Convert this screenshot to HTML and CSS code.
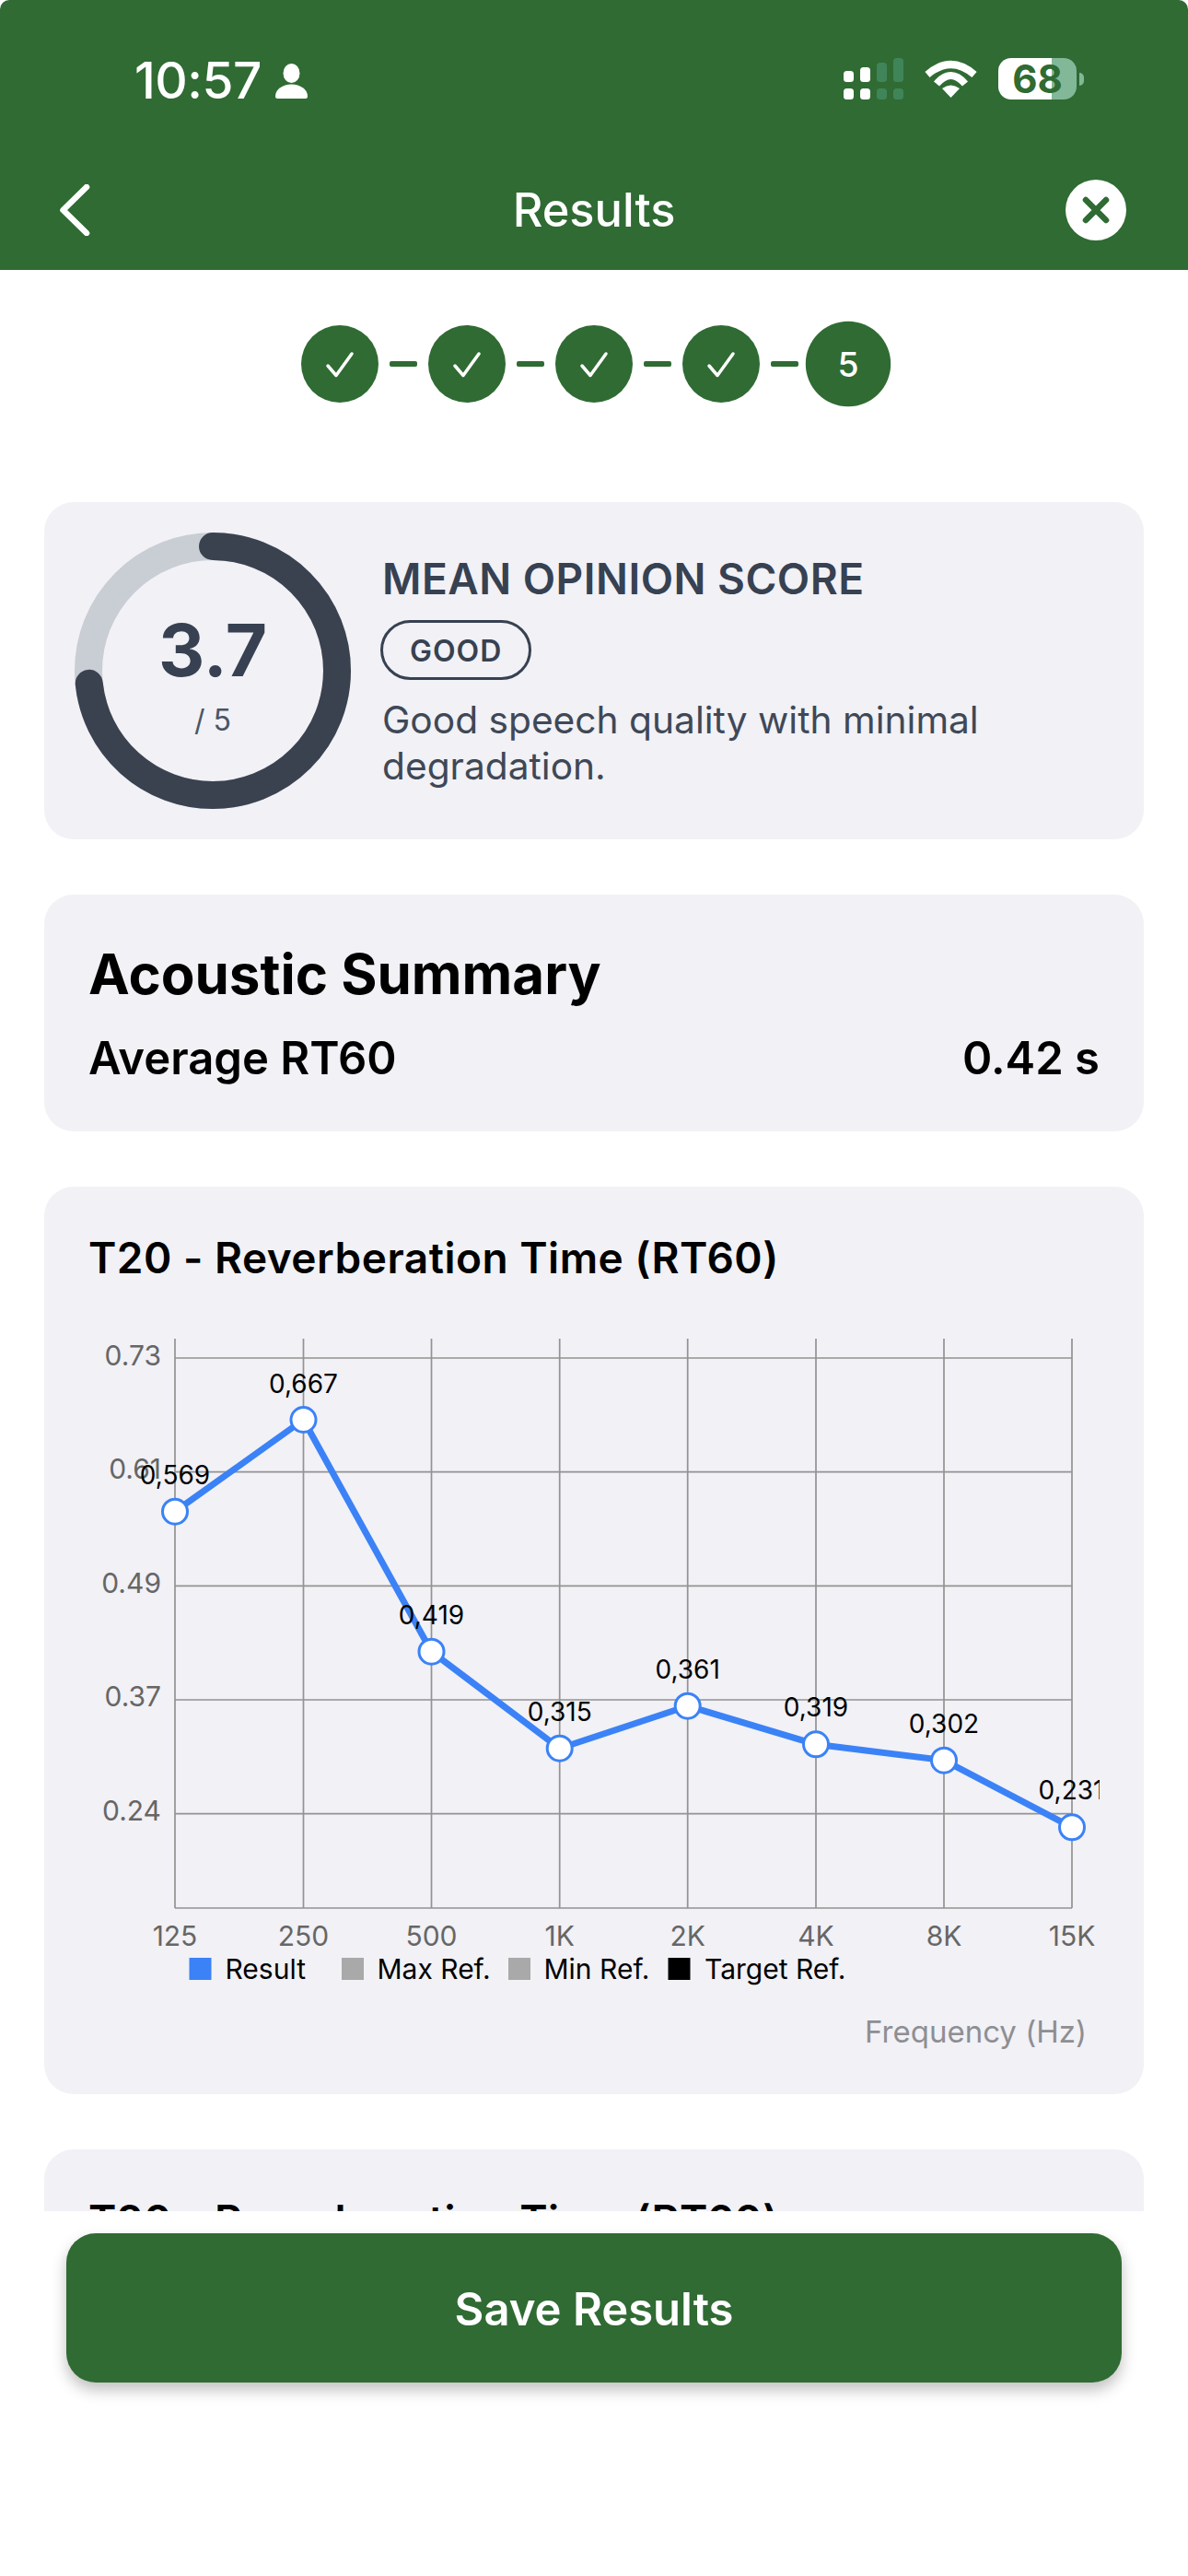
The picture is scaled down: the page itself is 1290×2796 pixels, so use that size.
FILE: index.html
```html
<!DOCTYPE html>
<html lang="en">
<head>
<meta charset="utf-8">
<title>Results</title>
<link rel="stylesheet" href="styles.css">
</head>
<body>
<div class="screen">
  <header class="header">
    <div class="status">
      <span class="time">10:57</span>
      <svg class="person" viewBox="0 0 35 38" width="35" height="38"><ellipse cx="17.5" cy="10.5" rx="9" ry="10.5"/><path d="M2.500 38H32.500Q35 38 35 35.500C35 28 27 22.500 17.500 22.500C8 22.500 0 28 0 35.500Q0 38 2.500 38Z"/></svg>
      <div class="status-right">
        <svg class="signal" viewBox="0 0 65 45" width="65" height="45">
          <rect class="on" x="0" y="14" width="11" height="12" rx="3.500"/><rect class="on" x="18" y="10" width="11" height="16" rx="3.500"/>
          <rect class="off" x="36" y="5" width="11" height="21" rx="3.500"/><rect class="off" x="54" y="0" width="11" height="26" rx="3.500"/>
          <rect class="on" x="0" y="33" width="11" height="12" rx="3.500"/><rect class="on" x="18" y="33" width="11" height="12" rx="3.500"/>
          <rect class="off" x="36" y="33" width="11" height="12" rx="3.500"/><rect class="off" x="54" y="33" width="11" height="12" rx="3.500"/>
        </svg>
        <svg class="wifi" viewBox="0 0 57 41" width="57" height="41">
          <path class="arc" d="M3 16Q28.500 -6 54 16"/><path class="arc" d="M13 26Q28.500 8 44 26"/><path class="wedge" d="M28.500 41L19 31Q28.500 24 38 31Z"/>
        </svg>
        <div class="battery"><div class="battery-body">68</div><div class="battery-cap"></div></div>
      </div>
    </div>
    <nav class="nav">
      <svg class="back" viewBox="0 0 33 56" width="33" height="56"><path d="M29 3L3.500 28L29 53"/></svg>
      <div class="nav-title">Results</div>
      <svg class="close" viewBox="0 0 66 66" width="66" height="66"><circle cx="33" cy="33" r="33"/><path d="M22 22L44 44M44 22L22 44"/></svg>
    </nav>
  </header>

  <main class="main">
    <div class="stepper">
      <div class="step"><svg viewBox="0 0 84 84" width="84" height="84"><path d="M29 44L38 54.500L55 31"/></svg></div>
      <div class="link"></div>
      <div class="step"><svg viewBox="0 0 84 84" width="84" height="84"><path d="M29 44L38 54.500L55 31"/></svg></div>
      <div class="link"></div>
      <div class="step"><svg viewBox="0 0 84 84" width="84" height="84"><path d="M29 44L38 54.500L55 31"/></svg></div>
      <div class="link"></div>
      <div class="step"><svg viewBox="0 0 84 84" width="84" height="84"><path d="M29 44L38 54.500L55 31"/></svg></div>
      <div class="link"></div>
      <div class="step step-current">5</div>
    </div>

    <section class="card card-score">
      <div class="gauge">
        <svg viewBox="0 0 300 300" width="300" height="300">
          <circle class="gauge-track" cx="150" cy="150" r="135"/>
          <circle class="gauge-value" cx="150" cy="150" r="135" stroke-dasharray="622 848.230" transform="rotate(-90 150 150)"/>
        </svg>
        <div class="gauge-text"><div class="gauge-num">3.7</div><div class="gauge-max">/ 5</div></div>
      </div>
      <div class="score-info">
        <div class="score-title">MEAN OPINION SCORE</div>
        <div class="pill">GOOD</div>
        <p class="score-desc">Good speech quality with minimal degradation.</p>
      </div>
    </section>

    <section class="card card-summary">
      <h2 class="summary-title">Acoustic Summary</h2>
      <div class="summary-row"><span>Average RT60</span><span>0.42 s</span></div>
    </section>

    <section class="card card-chart">
      <h3 class="chart-title">T20 - Reverberation Time (RT60)</h3>
      <svg class="chart" viewBox="96 1440 1098 720" width="1098" height="720">
        <g class="grid">
          <path d="M190 1453V2071M329.500 1453V2071M468.500 1453V2071M607.700 1453V2071M746.700 1453V2071M886 1453V2071M1025 1453V2071M1164 1453V2071"/>
          <path d="M190 1474H1164M190 1597.700H1164M190 1721.300H1164M190 1845H1164M190 1968.700H1164M190 2071H1164"/>
        </g>
        <g class="axis axis-y">
          <text x="175" y="1482">0.73</text><text x="175" y="1605">0.61</text><text x="175" y="1729">0.49</text><text x="175" y="1852">0.37</text><text x="175" y="1976">0.24</text>
        </g>
        <g class="axis axis-x">
          <text x="190" y="2112">125</text><text x="329.500" y="2112">250</text><text x="468.500" y="2112">500</text><text x="607.700" y="2112">1K</text><text x="746.700" y="2112">2K</text><text x="886" y="2112">4K</text><text x="1025" y="2112">8K</text><text x="1164" y="2112">15K</text>
        </g>
        <polyline class="series" points="190,1640.700 329.500,1541 468.500,1792.700 607.700,1897.700 746.700,1851.700 886,1893.300 1025,1910.700 1164,1983.300"/>
        <g class="dots">
          <circle cx="190" cy="1640.700" r="13.500"/><circle cx="329.500" cy="1541" r="13.500"/><circle cx="468.500" cy="1792.700" r="13.500"/><circle cx="607.700" cy="1897.700" r="13.500"/><circle cx="746.700" cy="1851.700" r="13.500"/><circle cx="886" cy="1893.300" r="13.500"/><circle cx="1025" cy="1910.700" r="13.500"/><circle cx="1164" cy="1983.300" r="13.500"/>
        </g>
        <g class="values">
          <text x="190" y="1611">0,569</text><text x="329.500" y="1512">0,667</text><text x="468.500" y="1763">0,419</text><text x="607.700" y="1868">0,315</text><text x="746.700" y="1822">0,361</text><text x="886" y="1863">0,319</text><text x="1025" y="1881">0,302</text><text x="1163" y="1953">0,231</text>
        </g>
        <g class="legend">
          <rect class="sw-blue" x="205.500" y="2125" width="24" height="24"/><text x="244.500" y="2148">Result</text>
          <rect class="sw-gray" x="371" y="2125" width="24" height="24"/><text x="409.500" y="2148">Max Ref.</text>
          <rect class="sw-gray" x="552" y="2125" width="24" height="24"/><text x="590.500" y="2148">Min Ref.</text>
          <rect class="sw-black" x="725.500" y="2125" width="24" height="24"/><text x="765" y="2148">Target Ref.</text>
        </g>
      </svg>
      <div class="chart-axis-title">Frequency (Hz)</div>
    </section>

    <section class="card card-chart">
      <h3 class="chart-title">T20 - Reverberation Time (RT60)</h3>
    </section>
  </main>

  <footer class="footer">
    <button class="save">Save Results</button>
  </footer>
</div>
</body>
</html>
```

FILE: styles.css
```css
* { box-sizing: border-box; }
html, body { margin: 0; padding: 0; background: #fff; }
body { font-family: Inter, "Liberation Sans", sans-serif; width: 1290px; height: 2796px; overflow: hidden; }
.screen { width: 1290px; height: 2796px; display: flex; flex-direction: column; }

.header { height: 293px; background: #2f6b33; border-radius: 10px 10px 0 0; color: #fff; padding-top: 57px; flex: none; }
.status { height: 60px; display: flex; align-items: center; padding: 0 113px 0 146px; }
.time { font-size: 55px; line-height: 60px; font-weight: 500; letter-spacing: -0.5px; }
.person { fill: #fff; margin-left: 15px; margin-top: 2px; }
.status-right { margin-left: auto; display: flex; align-items: center; gap: 23px; margin-top: -3px; }
.signal .on { fill: #fff; }
.signal .off { fill: #40855a; }
.wifi .arc { fill: none; stroke: #fff; stroke-width: 8; }
.wifi .wedge { fill: #fff; }
.battery { display: flex; align-items: center; gap: 3px; }
.battery-body { width: 85px; height: 45px; border-radius: 14px; background: linear-gradient(90deg, #fff 68%, #82b898 68%); color: #2f6b33; font-size: 42px; line-height: 45px; font-weight: 700; text-align: center; }
.battery-cap { width: 5px; height: 14px; border-radius: 0 5px 5px 0; background: #82b898; }

.nav { height: 130px; margin-top: 46px; padding: 0 65px; display: grid; grid-template-columns: 1fr auto 1fr; align-items: center; }
.back { fill: none; stroke: #fff; stroke-width: 6.500; stroke-linecap: round; stroke-linejoin: round; }
.nav-title { font-size: 50.500px; line-height: 56px; font-weight: 500; }
.close { justify-self: end; margin-right: 2px; }
.close circle { fill: #fff; }
.close path { fill: none; stroke: #2f6b33; stroke-width: 6.500; stroke-linecap: round; }

.main { height: 2107px; overflow: hidden; padding: 60px 48px 0; flex: none; }

.stepper { display: flex; align-items: center; justify-content: center; gap: 12px; height: 84px; margin-bottom: 108px; }
.step { width: 84px; height: 84px; border-radius: 50%; background: #2f6b33; color: #fff; display: flex; align-items: center; justify-content: center; flex: none; }
.step svg { fill: none; stroke: #fff; stroke-width: 3.500; stroke-linecap: round; stroke-linejoin: round; }
.step-current { transform: scale(1.1); font-size: 34px; font-weight: 500; }
.link { width: 30px; height: 6px; border-radius: 2px; background: #2f6b33; flex: none; }

.card { background: #f1f1f6; border-radius: 32px; margin-bottom: 60px; }

.card-score { height: 366px; padding: 0 33px; display: flex; align-items: center; gap: 32px; }
.gauge { width: 300px; height: 300px; position: relative; flex: none; }
.gauge svg { display: block; }
.gauge-track { fill: none; stroke: #c9cdd4; stroke-width: 30; }
.gauge-value { fill: none; stroke: #3a4250; stroke-width: 30; stroke-linecap: round; }
.gauge-text { position: absolute; inset: 0; padding-top: 8px; display: flex; flex-direction: column; align-items: center; justify-content: center; }
.gauge-num { font-size: 78px; line-height: 88px; font-weight: 700; color: #374151; }
.gauge-max { font-size: 32px; line-height: 40px; margin-top: 12px; color: #4b5563; }
.score-info { display: flex; flex-direction: column; align-items: flex-start; color: #374151; }
.score-title { font-size: 46px; line-height: 56px; font-weight: 600; margin-left: 2px; letter-spacing: 0.5px; }
.pill { height: 65px; margin-top: 17px; padding: 0 29px; border: 3px solid #374151; border-radius: 33px; font-size: 32px; line-height: 61px; font-weight: 600; letter-spacing: 1px; }
.score-desc { margin: 19px 0 0 2px; font-size: 40.700px; line-height: 50px; color: #3f4856; width: 740px; }

.card-summary { height: 257px; padding: 50px 48px 0; color: #000; }
.summary-title { margin: 0; font-size: 60px; line-height: 72px; font-weight: 700; }
.summary-row { display: flex; justify-content: space-between; margin-top: 26px; font-size: 49px; line-height: 60px; font-weight: 600; }

.card-chart { height: 985px; padding: 49px 48px 0; }
.chart-title { margin: 0; font-size: 46px; line-height: 56px; font-weight: 600; color: #000; letter-spacing: 0.5px; }
.chart { display: block; margin: 47px 0 0; overflow: hidden; }
.grid path { fill: none; stroke: #939393; stroke-width: 1.700; }
.axis text { font-size: 30px; fill: #666; }
.axis-y text { text-anchor: end; }
.axis-x text { text-anchor: middle; }
.series { fill: none; stroke: #3b82f6; stroke-width: 7; stroke-linejoin: round; }
.dots circle { fill: #fff; stroke: #3b82f6; stroke-width: 3; }
.values text { font-size: 28px; fill: #000; text-anchor: middle; }
.legend text { font-size: 30px; fill: #000; }
.sw-blue { fill: #3b82f6; }
.sw-gray { fill: #a9a9a9; }
.sw-black { fill: #000; }
.chart-axis-title { text-align: right; padding-right: 14px; margin-top: 25px; font-size: 33px; line-height: 40px; color: #8e8e93; }

.footer { flex: 1; padding: 24px 72px 0; background: #fff; }
.save { display: block; width: 100%; height: 162px; padding: 2px 0 0; border: 0; border-radius: 32px; background: #2f6b33; color: #fff; font-family: inherit; font-size: 49px; font-weight: 600; box-shadow: 0 8px 16px rgba(0,0,0,.25); }
```
